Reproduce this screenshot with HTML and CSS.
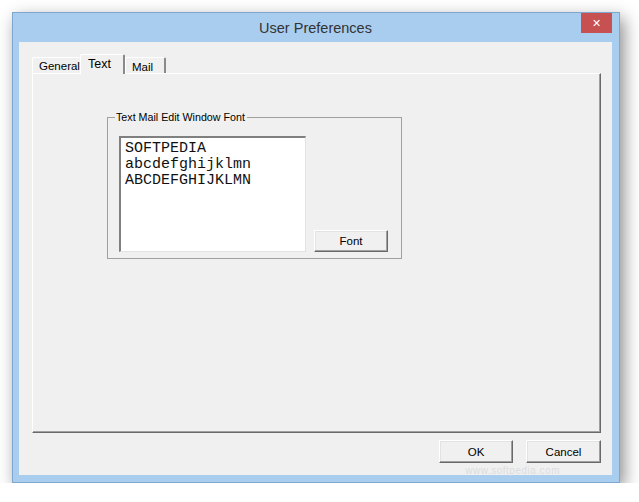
FILE: index.html
```html
<!DOCTYPE html>
<html>

<head>
    <meta charset="UTF-8" />
    <title>User Preferences</title>
    <link rel="stylesheet" href="styles.css">
</head>

<body>
    <div class="window">
        <div class="titlebar">
            <span></span>
            <span class="title">User Preferences</span>
            <button class="close">&#x2715;</button>
        </div>
        <div class="client">
            <div class="tabs">
                <div class="tab">General</div>
                <div class="tab active">Text</div>
                <div class="tab">Mail</div>
            </div>
            <div class="panel">
                <fieldset class="group">
                    <legend>Text Mail Edit Window Font</legend>
                    <div class="group-body">
                        <div class="preview">SOFTPEDIA<br>abcdefghijklmn<br>ABCDEFGHIJKLMN</div>
                        <button class="btn font-btn">Font</button>
                    </div>
                </fieldset>
            </div>
            <div class="actions">
                <button class="btn">OK</button>
                <button class="btn cancel">Cancel</button>
            </div>
            <div class="watermark">www.softpedia.com</div>
        </div>
    </div>
</body>

</html>
```

FILE: styles.css
```css
body {
    margin: 0;
    background-color: #ffffff;
    font-family: "Liberation Sans", Arial, sans-serif;
}

.window {
    margin: 12px 0 0 12px;
    width: 608px;
    height: 471px;
    box-sizing: border-box;
    border: 1px solid #7fa6cc;
    background-color: #a8cdef;
    padding: 0 7px 7px 6px;
    box-shadow: 4px 6px 16px rgba(0, 0, 0, 0.45);
}

.titlebar {
    height: 29px;
    display: grid;
    grid-template-columns: 1fr auto 1fr;
}

.title {
    font-size: 14.5px;
    color: #333333;
    padding-top: 7px;
}

.close {
    justify-self: end;
    width: 31px;
    height: 20px;
    border: none;
    padding: 0;
    background-color: #c75050;
    color: #ffffff;
    font-size: 11px;
    font-weight: bold;
    font-family: "DejaVu Sans", sans-serif;
}

.client {
    position: relative;
    height: 433px;
    box-sizing: border-box;
    background-color: #f0f0f0;
    padding: 12px 11px 0 13px;
    font-size: 11px;
    color: #000000;
}

.tabs {
    display: flex;
    align-items: flex-end;
    height: 19px;
}

.tab {
    height: 16px;
    box-sizing: border-box;
    padding: 2px 6px 0 6px;
    border-top: 1px solid #ffffff;
    border-left: 1px solid #ffffff;
    border-right: 2px solid #8a8a8a;
    border-radius: 2px 2px 0 0;
    background-color: #f0f0f0;
    font-size: 11.5px;
}

.tab:first-child {
    width: 48px;
    border-right: none;
}

.tab.active {
    position: relative;
    z-index: 1;
    width: 45px;
    height: 20px;
    margin-bottom: -1px;
    padding: 2px 6px 0 7px;
    font-size: 12.5px;
}

.tab:last-child {
    width: 41px;
    padding-top: 3px;
}

.panel {
    height: 360px;
    width: 569px;
    box-sizing: border-box;
    border-top: 1px solid #ffffff;
    border-left: 1px solid #ffffff;
    border-right: 1px solid #696969;
    border-bottom: 1px solid #696969;
    box-shadow: inset -1px -1px 0 #a0a0a0;
    padding: 37px 0 0 74px;
}

.group {
    margin: 0;
    width: 295px;
    height: 148px;
    box-sizing: border-box;
    border: 1px solid #a0a0a0;
    padding: 0 13px 5px 11px;
}

.group legend {
    padding: 0 2px 0 1px;
    margin-left: -4px;
    font-size: 10.7px;
    line-height: 13px;
    color: #000000;
}

.group-body {
    display: flex;
    align-items: flex-end;
    margin-top: 12px;
}

.preview {
    width: 187px;
    height: 116px;
    box-sizing: border-box;
    background-color: #ffffff;
    border-top: 2px solid #808080;
    border-left: 2px solid #808080;
    border-right: 1px solid #e3e3e3;
    border-bottom: 1px solid #e3e3e3;
    padding: 3px 0 0 4px;
    font-family: "Liberation Mono", "Courier New", monospace;
    font-size: 15px;
    line-height: 16px;
    color: #111111;
}

.btn {
    height: 23px;
    width: 74px;
    box-sizing: border-box;
    border-top: 1px solid #ffffff;
    border-left: 1px solid #ffffff;
    border-right: 1px solid #696969;
    border-bottom: 1px solid #696969;
    box-shadow: inset -1px -1px 0 #a0a0a0, inset 1px 1px 0 #e3e3e3;
    background-color: #f0f0f0;
    font-family: "Liberation Sans", Arial, sans-serif;
    font-size: 11.5px;
    color: #000000;
    padding: 0;
}

.font-btn {
    margin-left: 8px;
    height: 22px;
}

.actions {
    display: flex;
    justify-content: flex-end;
    gap: 13px;
    margin-top: 7px;
}

.cancel {
    width: 75px;
}

.watermark {
    position: absolute;
    right: 52px;
    bottom: -1px;
    font-size: 10px;
    color: #dcdcdc;
    letter-spacing: 0.5px;
}
```
